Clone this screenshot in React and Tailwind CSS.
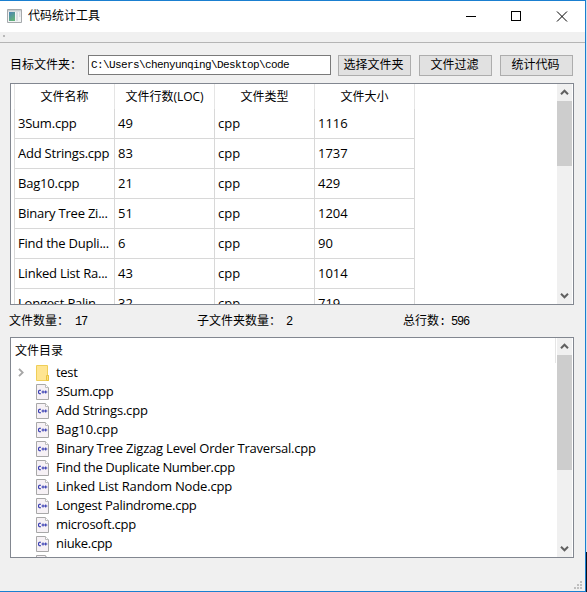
const UI = "font-['Open_Sans','Noto_Sans_CJK_SC',sans-serif]";
const SONG = "font-['Liberation_Mono','Noto_Sans_CJK_SC',monospace]";

const rows = [
  ["3Sum.cpp", "49", "cpp", "1116"],
  ["Add Strings.cpp", "83", "cpp", "1737"],
  ["Bag10.cpp", "21", "cpp", "429"],
  ["Binary Tree Zi...", "51", "cpp", "1204"],
  ["Find the Dupli...", "6", "cpp", "90"],
  ["Linked List Ra...", "43", "cpp", "1014"],
  ["Longest Palin...", "32", "cpp", "719"],
];

const files = [
  { name: "3Sum.cpp", tracking: "tracking-[-0.35px]" },
  { name: "Add Strings.cpp", tracking: "tracking-[-0.2px]" },
  { name: "Bag10.cpp", tracking: "tracking-[-0.12px]" },
  { name: "Binary Tree Zigzag Level Order Traversal.cpp", tracking: "tracking-[-0.21px]" },
  { name: "Find the Duplicate Number.cpp", tracking: "tracking-[-0.36px]" },
  { name: "Linked List Random Node.cpp", tracking: "tracking-[-0.17px]" },
  { name: "Longest Palindrome.cpp", tracking: "tracking-[-0.28px]" },
  { name: "microsoft.cpp", tracking: "tracking-[-0.25px]" },
  { name: "niuke.cpp", tracking: "tracking-[-0.3px]" },
  { name: "", tracking: "" },
];

function Arrow({ down }) {
  return (
    <div className="flex h-[17px] w-[15px] shrink-0 items-center justify-center">
      <svg width="9" height="7" viewBox="0 0 9 7" className={down ? "rotate-180" : ""}>
        <path d="M1 5.2 4.5 1.7 8 5.2" fill="none" stroke="#606060" strokeWidth="2" />
      </svg>
    </div>
  );
}

function ScrollBar({ thumb }) {
  return (
    <div className="mr-px flex w-[15px] shrink-0 flex-col bg-[#f0f0f0]">
      <Arrow />
      <div className={`bg-[#cdcdcd] ${thumb}`} />
      <div className="flex-1" />
      <Arrow down />
    </div>
  );
}

function CppIcon() {
  return (
    <svg width="13" height="16" viewBox="0 0 13 16" className="shrink-0">
      <path d="M.5.5h9l3 3v12H.5z" fill="#f6f1f5" stroke="#a8a8a8" />
      <path d="M9.5.5v3h3" fill="#fff" stroke="#bcbcbc" />
      <path d="M5 6.3H3.4L2.6 7v2l.8.7H5" fill="none" stroke="#3338b0" strokeWidth="1.1" />
      <path d="M5.5 8h5.8M7 6.5v3M9.7 6.5v3" fill="none" stroke="#3338b0" />
    </svg>
  );
}

function FolderIcon() {
  return (
    <svg width="13" height="16" viewBox="0 0 13 16" className="shrink-0">
      <path d="M.5.5h11v9.5l1 .5v5H.5z" fill="#ffe591" stroke="#efce58" />
      <path d="M10.5 15.5v-5h2v5z" fill="#ffe07d" stroke="#e8c23f" />
    </svg>
  );
}

function Button({ children }) {
  return (
    <button className="flex h-[21px] w-[73px] items-center justify-center border border-[#adadad] bg-[#e1e1e1] pt-px pr-[2px] text-[12px] leading-none whitespace-nowrap">
      {children}
    </button>
  );
}

export default function App() {
  return (
    <div className={`flex h-[592px] w-[587px] overflow-hidden text-black ${UI}`}>
      <div className="flex w-[586px] flex-col border-t border-r border-b border-[#1a7fd0] bg-[#f0f0f0]">
        <header className="flex h-[31px] shrink-0 items-center bg-white pb-px pl-[7px]">
          <svg width="15" height="14" viewBox="0 0 15 14">
            <path d="M.5.5h14v13H.5z" fill="#f2f4f4" stroke="#a5a9ac" />
            <path d="M1 1h13v1.5H1z" fill="#c5cbce" />
            <defs>
              <linearGradient id="pane" x1="0" y1="0" x2="0.5" y2="1">
                <stop offset="0" stopColor="#4b83b5" />
                <stop offset="1" stopColor="#61b17b" />
              </linearGradient>
            </defs>
            <path d="M2 3h6v9H2z" fill="url(#pane)" />
            <path d="M9 3h2v9H9zM12 3h1.5v5H12z" fill="#d9dde2" />
          </svg>
          <h1 className="ml-[6px] flex-1 text-[12px] leading-none">代码统计工具</h1>
          <svg width="104" height="11" viewBox="0 0 104 11" className="mr-4" shapeRendering="crispEdges">
            <path d="M1 5.5h10" stroke="#000" />
            <path d="M46.5.5h9v9h-9z" fill="none" stroke="#000" />
            <path d="m92 .5 10 10m0-10-10 10" stroke="#000" shapeRendering="auto" />
          </svg>
        </header>
        <div className="h-[11px] shrink-0 border-b border-[#b5b5b5] pt-[3px] pl-[3px]">
          <div className="size-[2px] bg-[#b8b8b8]" />
        </div>

        <div className={`mt-3 flex h-[21px] shrink-0 items-center pl-[10px] ${SONG}`}>
          <label className="w-[78px] pt-px text-[12px] leading-none whitespace-nowrap">目标文件夹：</label>
          <div className="h-5 w-[243px] self-start border border-[#7a7a7a] bg-white pl-[2px] text-[11px] leading-[19px] tracking-[-0.6px]">
            C:\Users\chenyunqing\Desktop\code
          </div>
          <div className="ml-[7px] flex gap-2">
            <Button>选择文件夹</Button>
            <Button>文件过滤</Button>
            <Button>统计代码</Button>
          </div>
        </div>

        <section className="mt-[7px] ml-[10px] flex h-[222px] w-[564px] shrink-0 overflow-hidden border border-[#828790] bg-white">
          <div className="ml-[3px] w-[401px] shrink-0 text-[13px]">
            <div className="grid h-[25px] grid-cols-4 border-l border-[#e5e5e5]">
              {["文件名称", "文件行数(LOC)", "文件类型", "文件大小"].map((h) => (
                <div key={h} className="flex items-center justify-center border-r border-[#e5e5e5] pt-px text-[12px] leading-none">
                  {h}
                </div>
              ))}
            </div>
            {rows.map((row) => (
              <div key={row[0]} className="grid h-[30px] grid-cols-4 border-l border-[#d8d8d8]">
                {row.map((cell, i) => (
                  <div
                    key={i}
                    className={`border-r border-b border-[#d8d8d8] pl-[3px] leading-[29px] whitespace-nowrap ${i === 0 ? "tracking-[-0.22px]" : ""}`}
                  >
                    {cell}
                  </div>
                ))}
              </div>
            ))}
          </div>
          <div className="flex-1" />
          <ScrollBar thumb="h-[65px]" />
        </section>

        <div className={`flex h-8 shrink-0 items-center pt-[2px] pl-[9px] text-[12px] leading-none whitespace-nowrap ${SONG}`}>
          <div className="flex w-[188px]">
            <span className="w-[66px]">文件数量：</span>
            <span className="tracking-[-1.2px]">17</span>
          </div>
          <div className="flex w-[206px]">
            <span className="w-[89px]">子文件夹数量：</span>
            <span className="tracking-[-1.2px]">2</span>
          </div>
          <span className="w-[48px]">总行数:</span>
          <span className="tracking-[-1.2px]">596</span>
        </div>

        <section className="ml-[10px] flex h-[221px] w-[564px] shrink-0 overflow-hidden border border-[#828790] bg-white">
          <div className="flex-1 text-[13px]">
            <div className="flex h-[25px] items-center pl-1 text-[12px] leading-none">文件目录</div>
            <div className="flex h-[19px] items-center">
              <svg width="6" height="9" viewBox="0 0 6 9" className="mr-[12px] ml-[7px]">
                <path d="m1 .8 3.7 3.7L1 8.2" fill="none" stroke="#a6a6a6" strokeWidth="1.8" />
              </svg>
              <FolderIcon />
              <span className="ml-[7px] leading-[19px] tracking-[-0.3px]">test</span>
            </div>
            {files.map(({ name, tracking }, i) => (
              <div key={i} className="flex h-[19px] items-center pl-[25px] whitespace-nowrap">
                <CppIcon />
                <span className={`ml-[7px] leading-[19px] ${tracking}`}>{name}</span>
              </div>
            ))}
          </div>
          <div className="mr-px h-[25px] w-px bg-[#e5e5e5]" />
          <ScrollBar thumb="h-[115px]" />
        </section>

        <footer className="flex flex-1 items-end justify-end pr-[3px] pb-[2px]">
          <svg width="8" height="8" viewBox="0 0 8 8" fill="#bfbfbf" shapeRendering="crispEdges">
            <path d="M6 0h2v2H6zM3 3h2v2H3zM6 3h2v2H6zM0 6h2v2H0zM3 6h2v2H3zM6 6h2v2H6z" />
          </svg>
        </footer>
      </div>
      <div className="flex w-px flex-col">
        <div className="flex-1 bg-[#d5e2ee]" />
        <div className="h-10 bg-[#0a0f1e]" />
      </div>
    </div>
  );
}
